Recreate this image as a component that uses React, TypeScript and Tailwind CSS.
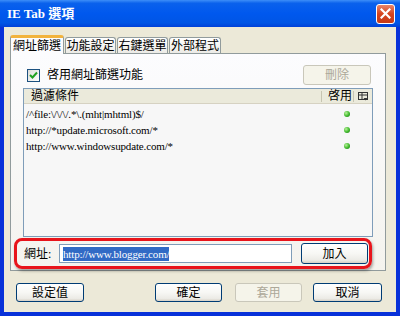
const font = "font-['Liberation_Serif','Noto_Sans_CJK_TC',serif]";

function XpButton({ label, width, disabled }: { label: string; width: string; disabled?: boolean }) {
  return (
    <div
      className={`${width} flex items-center justify-center rounded-[3px] border text-[12px] leading-none ${
        disabled
          ? 'border-[#C9C7BA] bg-[#F5F4EA] text-[#ACA899]'
          : 'border-[#003C74] bg-[linear-gradient(to_bottom,#FFFFFF_0%,#F7F7F4_50%,#ECEBE6_85%,#D6D0C5_100%)] text-black'
      }`}
    >
      {label}
    </div>
  );
}

function Tab({ label, width, active }: { label: string; width: string; active?: boolean }) {
  if (active) {
    return (
      <div className={`${width} relative z-10 -mb-px flex h-[19px] items-center justify-center rounded-t-[3px] border border-b-0 border-[#919B9C] border-t-[3px] border-t-[#F2B33D] bg-[#FCFCFE] text-[12px] leading-none`}>
        {label}
      </div>
    );
  }
  return (
    <div className={`${width} flex h-[16px] items-center justify-center rounded-t-[3px] border border-b-0 border-[#919B9C] bg-[linear-gradient(to_bottom,#FFFFFF,#ECEBE6)] text-[12px] leading-none`}>
      {label}
    </div>
  );
}

function Dot() {
  return <div className="h-[6px] w-[6px] rounded-full bg-[radial-gradient(circle_at_35%_35%,#B8F29A_0%,#3DB82A_55%,#1D6E14_100%)]" />;
}

const rows = [
  '/^file:\\/\\/\\/.*\\.(mht|mhtml)$/',
  'http://*update.microsoft.com/*',
  'http://www.windowsupdate.com/*',
];

export default function App() {
  return (
    <div className={`${font} flex h-[316px] w-[400px] flex-col overflow-hidden bg-[#0831D9] text-black`}>
      {/* title bar */}
      <div className="flex h-[27px] items-center justify-between bg-[linear-gradient(to_bottom,#3D8EF8_0%,#0A61EC_12%,#0058EE_50%,#0055E5_85%,#0040D8_100%)] pl-[7px] pr-[5px]">
        <span className="text-[13px] font-bold leading-none text-white">IE Tab 選項</span>
        <div className="flex h-[20px] w-[19px] items-center justify-center rounded-[3px] border border-white bg-[linear-gradient(to_bottom,#E8866A,#D5431E_50%,#C63A17)]">
          <svg width="11" height="11" viewBox="0 0 11 11">
            <path d="M1.5 1.5 L9.5 9.5 M9.5 1.5 L1.5 9.5" stroke="white" strokeWidth="2.2" strokeLinecap="square" />
          </svg>
        </div>
      </div>

      {/* body */}
      <div className="mx-[4px] mb-[4px] flex flex-1 flex-col bg-[#ECE9D8]">
        <div className="ml-[6px] mt-[8px] flex items-end gap-[1px]">
          <Tab label="網址篩選" width="w-[54px]" active />
          <Tab label="功能設定" width="w-[51px]" />
          <Tab label="右鍵選單" width="w-[51px]" />
          <Tab label="外部程式" width="w-[52px]" />
        </div>

        {/* tab panel */}
        <div className="ml-[6px] mr-[10px] flex h-[218px] flex-col border border-[#919B9C] bg-[linear-gradient(to_bottom,#FCFCFE,#F4F3EE)]">
          <div className="mt-[11px] flex h-[20px] items-center justify-between pl-[16px] pr-[14px]">
            <div className="flex items-center gap-[7px]">
              <div className="flex h-[13px] w-[13px] items-center justify-center border border-[#1C5180] bg-[linear-gradient(135deg,#DCDCD7,#FFFFFF)]">
                <svg width="9" height="9" viewBox="0 0 9 9">
                  <path d="M1 4 L3.5 6.5 L8 1.5" fill="none" stroke="#21A121" strokeWidth="2" />
                </svg>
              </div>
              <span className="text-[12px] leading-none">啓用網址篩選功能</span>
            </div>
            <XpButton label="刪除" width="w-[68px] h-[20px]" disabled />
          </div>

          {/* list */}
          <div className="mx-[12px] mt-[3px] flex h-[149px] flex-col border border-[#7F9DB9] bg-[#F7F7F7]">
            <div className="flex h-[15px] items-center border-b border-[#D6D2C2] bg-[#EBEADB] text-[12px] leading-none">
              <span className="flex-1 pl-[7px]">過濾條件</span>
              <div className="h-[11px] w-px bg-[#C7C5B2]" />
              <span className="w-[31px] pl-[6px]">啓用</span>
              <div className="h-[11px] w-px bg-[#C7C5B2]" />
              <div className="flex w-[18px] items-center justify-center">
                <svg width="10" height="9" viewBox="0 0 10 9">
                  <rect x="0.5" y="0.5" width="9" height="7" fill="none" stroke="#333" />
                  <path d="M0.5 3 H9.5 M4 0.5 V7.5" stroke="#333" />
                  <path d="M5.5 6 H9.5 L7.5 8.5 Z" fill="#333" />
                </svg>
              </div>
            </div>
            <div className="flex flex-col pt-[2px]">
              {rows.map((r) => (
                <div key={r} className="flex h-[16px] items-center">
                  <span className="flex-1 pl-[2px] text-[11px] leading-none tracking-[-0.15px]">{r}</span>
                  <div className="mr-[22px]">
                    <Dot />
                  </div>
                </div>
              ))}
            </div>
          </div>

          {/* url row (annotated with red box) */}
          <div className="ml-[3px] mr-[13px] mt-px flex h-[31px] items-center rounded-[8px] border-[3px] border-[#E8141B] pl-[7px] shadow-[1px_2px_3px_rgba(0,0,0,0.35)]">
            <span className="w-[35px] text-[12px] leading-none">網址:</span>
            <div className="flex h-[19px] w-[233px] items-center border border-[#7F9DB9] bg-white pl-[3px]">
              <span className="bg-[#316AC5] text-[11px] leading-[14px] tracking-[-0.15px] text-white">http://www.blogger.com/</span>
            </div>
            <div className="ml-[9px]">
              <XpButton label="加入" width="w-[67px] h-[21px]" />
            </div>
          </div>
        </div>

        {/* bottom buttons */}
        <div className="mt-[12px] flex h-[19px]">
          <div className="ml-[12px] flex">
            <XpButton label="設定值" width="w-[68px]" />
          </div>
          <div className="ml-[71px] flex">
            <XpButton label="確定" width="w-[67px]" />
          </div>
          <div className="ml-[13px] flex">
            <XpButton label="套用" width="w-[67px]" disabled />
          </div>
          <div className="ml-[11px] flex">
            <XpButton label="取消" width="w-[69px]" />
          </div>
        </div>
      </div>
    </div>
  );
}
